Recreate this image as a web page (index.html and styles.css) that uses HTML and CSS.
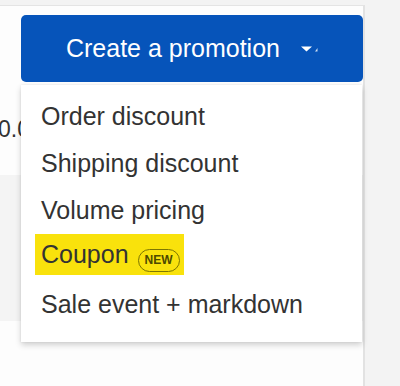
FILE: index.html
```html
<!DOCTYPE html>
<html>
<head>
<meta charset="utf-8">
<title>Create a promotion</title>
<link rel="stylesheet" href="styles.css">
</head>
<body>
<div class="page">
  <div class="toolbar">
    <div class="dropdown">
      <button class="btnPrimary" type="button">
        <span>Create a promotion</span>
        <svg class="caret" width="17" height="8" viewBox="0 0 17 8"><polygon points="0,1.5 11,1.5 5.5,6.5" fill="#fff"/><polygon points="14,6.5 16.5,3 16.5,6.5" fill="#fff" opacity="0.8"/></svg>
      </button>
      <!-- menu is open, so it sits over the listing below -->
      <ul class="menu">
        <li class="menuItem">Order discount</li>
        <li class="menuItem">Shipping discount</li>
        <li class="menuItem">Volume pricing</li>
        <li class="menuItem"><span class="marker">Coupon<span class="badgeNew">NEW</span></span></li>
        <li class="menuItem">Sale event + markdown</li>
      </ul>
    </div>
  </div>
  <div class="listing">
    <div class="row">0.00</div>
    <div class="row rowAlt"></div>
  </div>
</div>
</body>
</html>
```

FILE: styles.css
```css
  body { margin: 0; background-color: #f3f3f3; font-family: "Liberation Sans", Arial, sans-serif; }
  .page { width: 363px; min-height: 380px; margin-top: 5px; background-color: #fdfdfd; border-top: 1px solid #e4e4e4; border-right: 2px solid #e2e2e2; }
  .toolbar { padding: 9px 0 0 21px; }
  .dropdown { position: relative; }
  .btnPrimary { display: flex; align-items: center; justify-content: center; gap: 21px; width: 342px; height: 67px; padding: 0; border: 0; border-radius: 5px; background-color: #0654ba; color: #fff; font-family: "Liberation Sans", Arial, sans-serif; font-size: 25px; }
  .caret { display: block; }
  .menu { position: absolute; top: 70px; left: 0; width: 341px; margin: 0; padding: 8px 0 14px; list-style: none; background-color: #fff; box-shadow: 0 3px 6px rgba(0,0,0,0.18), 0 0 2px rgba(0,0,0,0.08); z-index: 2; }
  .menuItem { padding-left: 20px; font-size: 25px; line-height: 47px; height: 47px; color: #333; white-space: nowrap; }
  .marker { display: inline-block; vertical-align: top; height: 41px; line-height: 41px; margin-left: -6px; padding: 0 4px 0 6px; background-color: #f9e20c; color: #333; }
  .badgeNew { display: inline-block; vertical-align: -1px; margin-left: 9px; padding: 0 6px; height: 21px; line-height: 21px; border: 1px solid #7d7600; border-radius: 12px; font-size: 12px; font-weight: bold; color: #4d4a00; }
  .listing { font-size: 23px; color: #333; }
  .row { height: 93px; box-sizing: border-box; padding-top: 34px; line-height: 27px; text-indent: -2px; overflow: hidden; }
  .rowAlt { height: 146px; background-color: #f4f4f4; }
```
